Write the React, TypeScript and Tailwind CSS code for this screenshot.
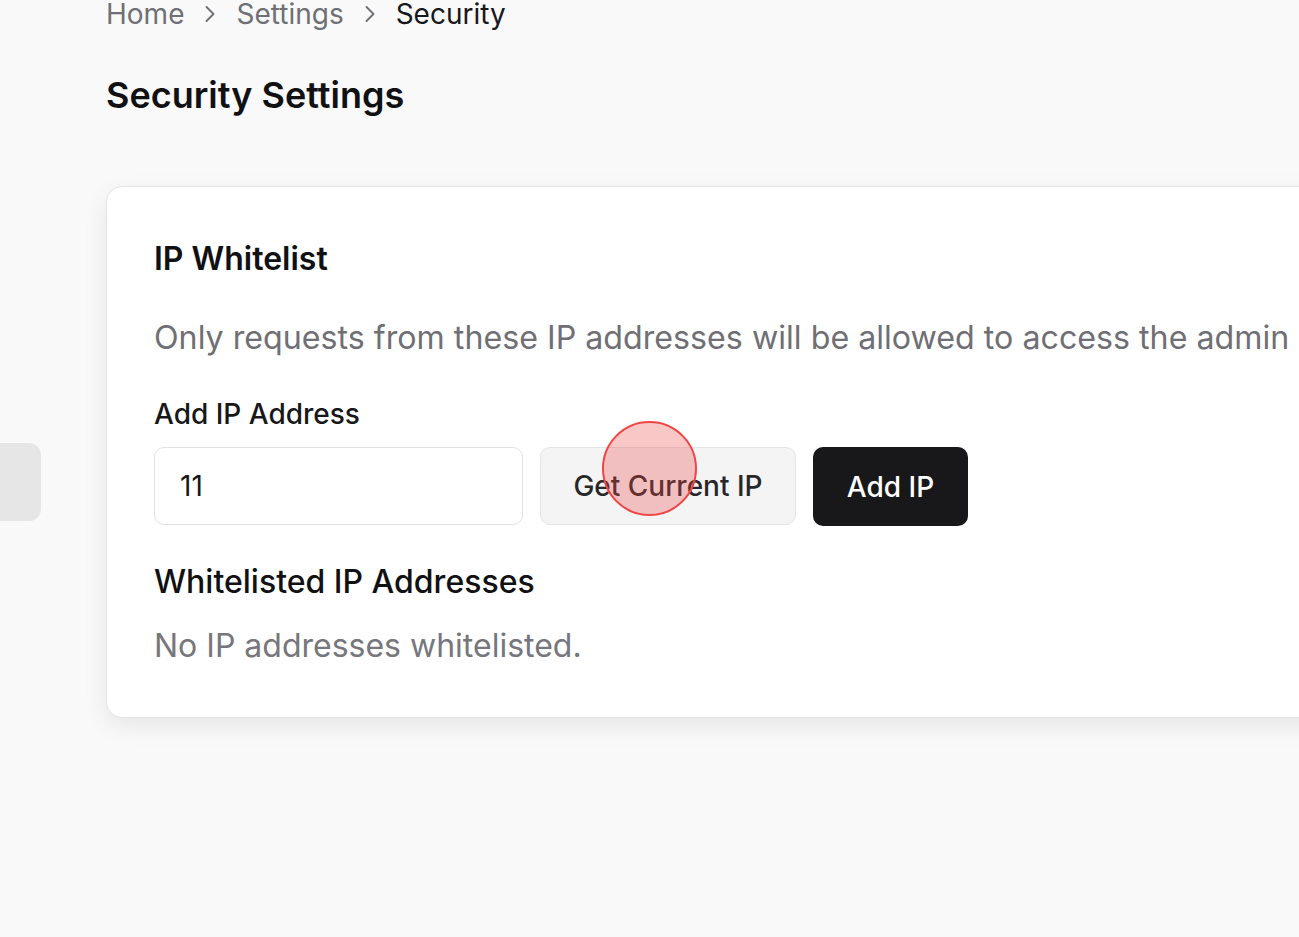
import React from "react";
import { ChevronRight } from "lucide-react";

export default function App() {
  return (
    <div
      className="relative w-[1299px] h-[937px] overflow-hidden bg-[#f9f9f9]"
      style={{ fontFamily: "Inter, 'Noto Sans', sans-serif" }}
    >
      <div className="flex h-full">
        {/* sidebar edge */}
        <div className="w-[41px] shrink-0 pt-[443px]">
          <div className="h-[78px] w-[41px] rounded-r-[12px] bg-[#e6e6e7]" />
        </div>
        <main className="pl-[65px] shrink-0">
          {/* breadcrumb */}
          <nav className="mt-[-6px] flex h-[40px] items-center gap-[12px] text-[28px] leading-[40px] text-[#6f6f75]">
            <span>Home</span>
            <ChevronRight size={28} strokeWidth={1.6} className="text-[#6f6f75]" />
            <span>Settings</span>
            <ChevronRight size={28} strokeWidth={1.6} className="text-[#6f6f75]" />
            <span className="text-[#18181b]">Security</span>
          </nav>
          <h1 className="mt-[33px] text-[36px] leading-[56px] font-semibold text-[#111113]">
            Security Settings
          </h1>
          <section className="mt-[63px] w-[1300px] rounded-[16px] border border-[#e4e4e7] bg-white px-[47px] pt-[48px] pb-[47px] shadow-[0_8px_24px_rgba(0,0,0,0.08)]">
            <h2 className="text-[32px] leading-[48px] font-semibold text-[#111113]">
              IP Whitelist
            </h2>
            <p className="mt-[31px] text-[32.2px] leading-[48px] text-[#6f6f75] whitespace-nowrap">
              Only requests from these IP addresses will be allowed to access the admin
            </p>
            <label className="mt-[32px] block text-[28px] leading-[40px] font-medium text-[#18181b]">
              Add IP Address
            </label>
            <div className="mt-[13px] flex gap-[17px]">
              <div className="flex h-[78px] w-[369px] items-center rounded-[10px] border border-[#e2e2e5] bg-white px-[25px] text-[28px] text-[#18181b]">
                11
              </div>
              <button className="h-[78px] w-[256px] rounded-[10px] border border-[#e4e4e7] bg-[#f4f4f5] text-[28px] font-medium text-[#27272a]">
                Get Current IP
              </button>
              <button className="h-[79px] w-[155px] rounded-[10px] bg-[#18181b] text-[28px] font-medium text-white">
                Add IP
              </button>
            </div>
            <h3 className="mt-[32px] text-[32px] leading-[48px] font-medium text-[#111113]">
              Whitelisted IP Addresses
            </h3>
            <p className="mt-[16px] text-[32px] leading-[48px] text-[#76767c]">
              No IP addresses whitelisted.
            </p>
          </section>
        </main>
      </div>
      {/* click indicator */}
      <div className="absolute left-[602px] top-[421px] h-[95px] w-[95px] rounded-full border-2 border-[#ef4444] bg-[rgba(239,68,68,0.3)]" />
    </div>
  );
}
